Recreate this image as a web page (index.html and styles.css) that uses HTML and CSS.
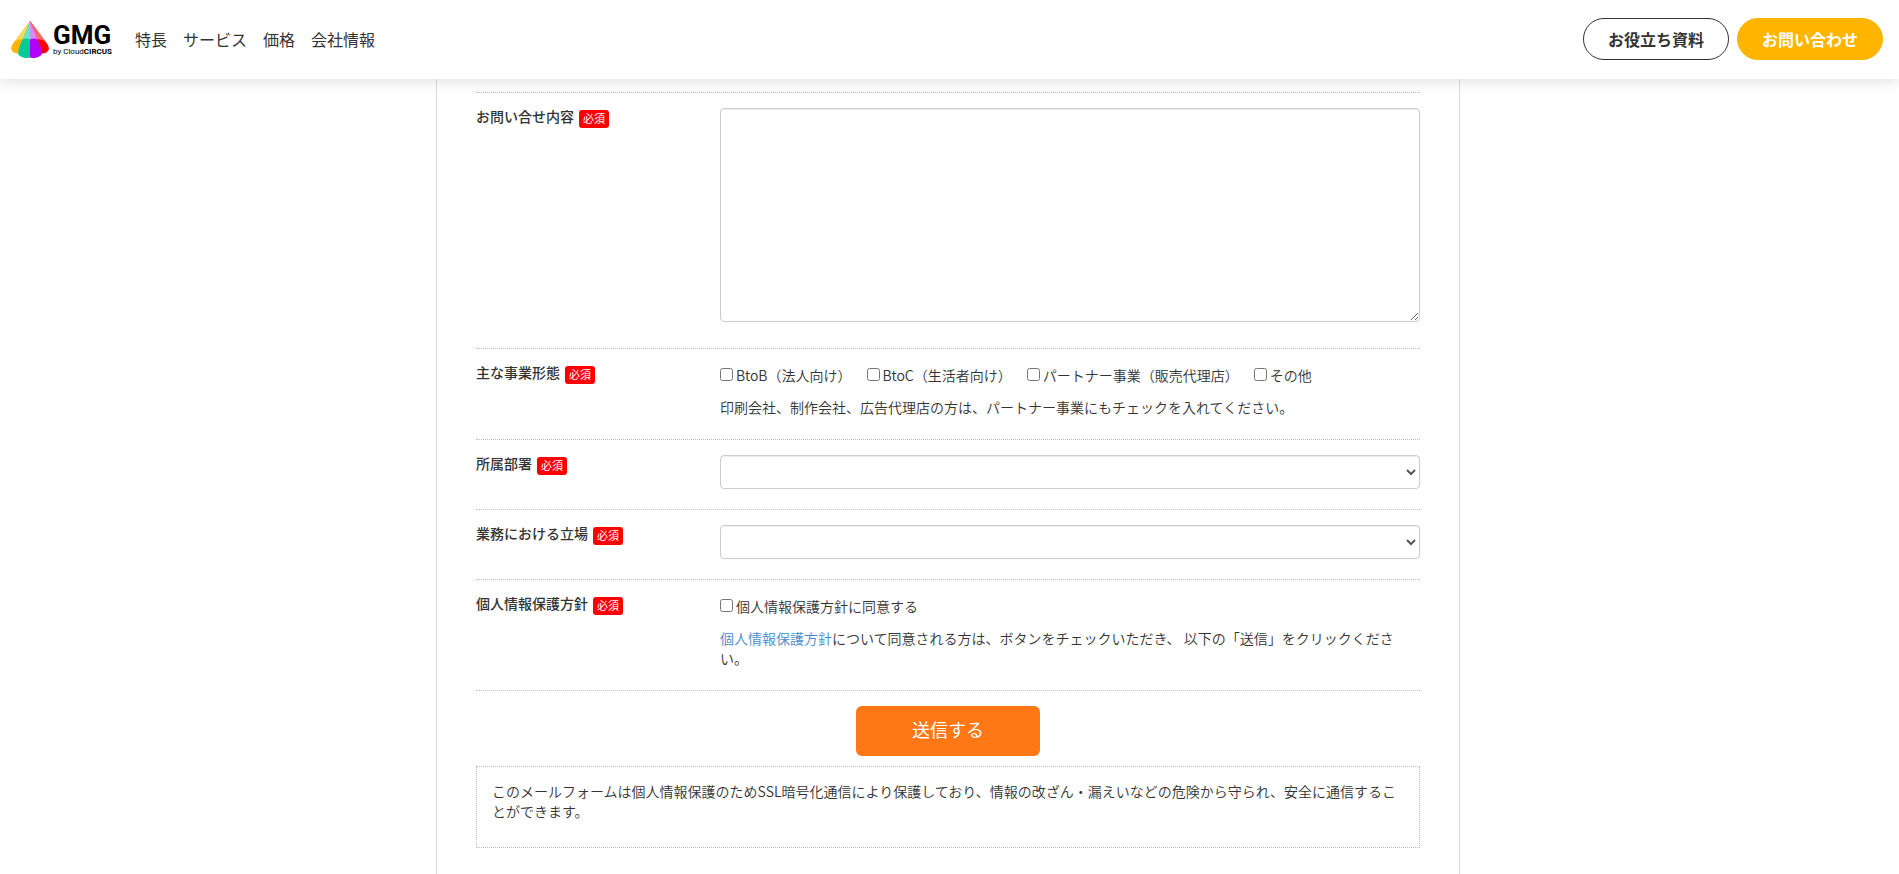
FILE: index.html
```html
<!DOCTYPE html>
<html lang="ja">
<head>
<meta charset="utf-8">
<meta name="viewport" content="width=device-width, initial-scale=1">
<title>お問い合わせ | GMG</title>
<link rel="stylesheet" href="styles.css">
</head>
<body>
<header class="header">
  <a class="logo" href="#">
    <svg class="logo-mark" viewBox="0 0 38 37" width="38" height="37" aria-hidden="true">
      <path d="M19 0 2 22.500Q0 25 0 28Q2 33 8 32.500L19 20Z" fill="#ffb400"/>
      <path d="M19 0 36 22.500Q38 25 38 28Q36 33 30 32.500L19 20Z" fill="#f00"/>
      <path d="M19 0 8 27Q7 30 7.500 34Q13 38.500 19 36.500Z" fill="#00cc99"/>
      <path d="M19 0 30 27Q31 30 30.500 34Q25 38.500 19 36.500Z" fill="#b400ff"/>
      <path d="M19 0 3 21Q8 17.500 11.500 18.500Z" fill="#ffd95c"/>
      <path d="M19 0 35 21Q30 17.500 26.500 18.500Z" fill="#ff6666"/>
      <path d="M19 0 11.500 18.500Q14.500 16.500 19 18.500Z" fill="#66e6c2"/>
      <path d="M19 0 26.500 18.500Q23.500 16.500 19 18.500Z" fill="#d98cff"/>
    </svg>
    <span class="logo-text">
      <span class="logo-name">GMG</span>
      <span class="logo-sub">by Cloud<b>CIRCUS</b></span>
    </span>
  </a>
  <nav class="nav">
    <a href="#">特長</a>
    <a href="#">サービス</a>
    <a href="#">価格</a>
    <a href="#">会社情報</a>
  </nav>
  <div class="actions">
    <a class="pill" href="#">お役立ち資料</a>
    <a class="pill pill-primary" href="#">お問い合わせ</a>
  </div>
</header>
<main class="main">
  <form class="card">
    <div class="rows">
      <div class="row">
        <div class="row-label"><label for="message">お問い合せ内容</label><span class="badge">必須</span></div>
        <div class="row-field"><textarea class="control message" id="message"></textarea></div>
      </div>
      <div class="row" role="group" aria-labelledby="biz">
        <div class="row-label"><span id="biz">主な事業形態</span><span class="badge">必須</span></div>
        <div class="row-field">
          <div class="options">
            <label class="option"><input type="checkbox">BtoB（法人向け）</label>
            <label class="option"><input type="checkbox">BtoC（生活者向け）</label>
            <label class="option"><input type="checkbox">パートナー事業（販売代理店）</label>
            <label class="option"><input type="checkbox">その他</label>
          </div>
          <p class="note">印刷会社、制作会社、広告代理店の方は、パートナー事業にもチェックを入れてください。</p>
        </div>
      </div>
      <div class="row">
        <div class="row-label"><label for="dept">所属部署</label><span class="badge">必須</span></div>
        <div class="row-field"><select class="control" id="dept"><option></option></select></div>
      </div>
      <div class="row">
        <div class="row-label"><label for="role">業務における立場</label><span class="badge">必須</span></div>
        <div class="row-field"><select class="control" id="role"><option></option></select></div>
      </div>
      <div class="row" role="group" aria-labelledby="privacy">
        <div class="row-label"><span id="privacy">個人情報保護方針</span><span class="badge">必須</span></div>
        <div class="row-field">
          <div class="options">
            <label class="option"><input type="checkbox">個人情報保護方針に同意する</label>
          </div>
          <p class="note"><a href="#">個人情報保護方針</a>について同意される方は、ボタンをチェックいただき、 以下の「送信」をクリックください。</p>
        </div>
      </div>
    </div>
    <button class="submit" type="submit">送信する</button>
    <p class="ssl">このメールフォームは個人情報保護のためSSL暗号化通信により保護しており、情報の改ざん・漏えいなどの危険から守られ、安全に通信することができます。</p>
  </form>
</main>
</body>
</html>
```
FILE: styles.css
```css
* {
  box-sizing: border-box;
}

body {
  margin: 0;
  min-height: 100vh;
  display: flex;
  flex-direction: column;
  background: #fff;
  color: #333;
  font-family: "Noto Sans CJK JP", sans-serif;
  font-size: 14px;
  line-height: 20px;
}

a {
  color: inherit;
  text-decoration: none;
}

p {
  margin: 0;
}

.header {
  position: relative;
  z-index: 1;
  display: flex;
  align-items: center;
  height: 79px;
  padding: 0 16px 0 11px;
  background: #fff;
  box-shadow: 0 0 16px rgba(0, 0, 0, 0.16);
}

.logo {
  display: flex;
  align-items: center;
  gap: 4px;
  color: #000;
  font-family: Roboto, sans-serif;
}

.logo-mark {
  display: block;
}

.logo-text {
  display: flex;
  flex-direction: column;
}

.logo-name {
  font-size: 26px;
  font-weight: 700;
  line-height: 24px;
}

.logo-sub {
  font-size: 8px;
  line-height: 10px;
}

.nav {
  display: flex;
  gap: 16px;
  margin-left: 23px;
  margin-bottom: 2px;
  font-size: 16px;
}

.actions {
  display: flex;
  gap: 8px;
  margin-left: auto;
  margin-bottom: 1px;
}

.pill {
  padding: 10px 24px;
  border: 1px solid #333;
  border-radius: 21px;
  font-size: 16px;
  font-weight: 700;
}

.pill-primary {
  border-color: #ffb400;
  background: #ffb400;
  color: #fff;
}

.main {
  flex: 1;
  display: flex;
  justify-content: center;
  padding-right: 3px;
  font-weight: 350;
}

.card {
  width: 100%;
  max-width: 1024px;
  padding: 13px 39px 24px;
  border: solid #ddd;
  border-width: 0 1px;
}

.rows {
  border-bottom: 1px dotted #bbb;
}

.row {
  display: grid;
  grid-template-columns: 244px 1fr;
  padding: 15px 0 20px;
  border-top: 1px dotted #bbb;
}

.row-label {
  display: flex;
  align-items: flex-start;
  gap: 5px;
  font-weight: 500;
  line-height: 16px;
}

.badge {
  margin-top: 2px;
  padding: 0 4px 2px;
  border-radius: 3px;
  background: #f00;
  color: #fff;
  font-size: 11px;
  font-weight: 400;
  line-height: 16px;
}

.control {
  display: block;
  width: 100%;
  height: 34px;
  padding: 6px 0;
  border: 1px solid #ccc;
  border-radius: 4px;
  background: #fff;
  box-shadow: inset 0 1px 1px rgba(0, 0, 0, 0.075);
  color: #555;
  font: inherit;
}

.message {
  height: 214px;
  margin-bottom: 6px;
  resize: vertical;
}

.options {
  display: flex;
  flex-wrap: wrap;
  column-gap: 15px;
  padding: 2px 0 13px;
}

.option {
  display: flex;
  align-items: flex-start;
  gap: 3px;
  line-height: 18px;
}

.option input {
  width: 13px;
  height: 13px;
  margin: 2px 0 0;
}

.note {
  margin-bottom: 2px;
}

.note a {
  color: #428bca;
}

.submit {
  display: block;
  width: 184px;
  height: 50px;
  margin: 15px auto 10px;
  padding: 0 0 4px;
  border: 0;
  border-radius: 6px;
  background: #ff7815;
  color: #fff;
  font: inherit;
  font-size: 18px;
  font-weight: 400;
}

.ssl {
  padding: 14px 15px 26px;
  border: 1px dotted #bbb;
}
```
